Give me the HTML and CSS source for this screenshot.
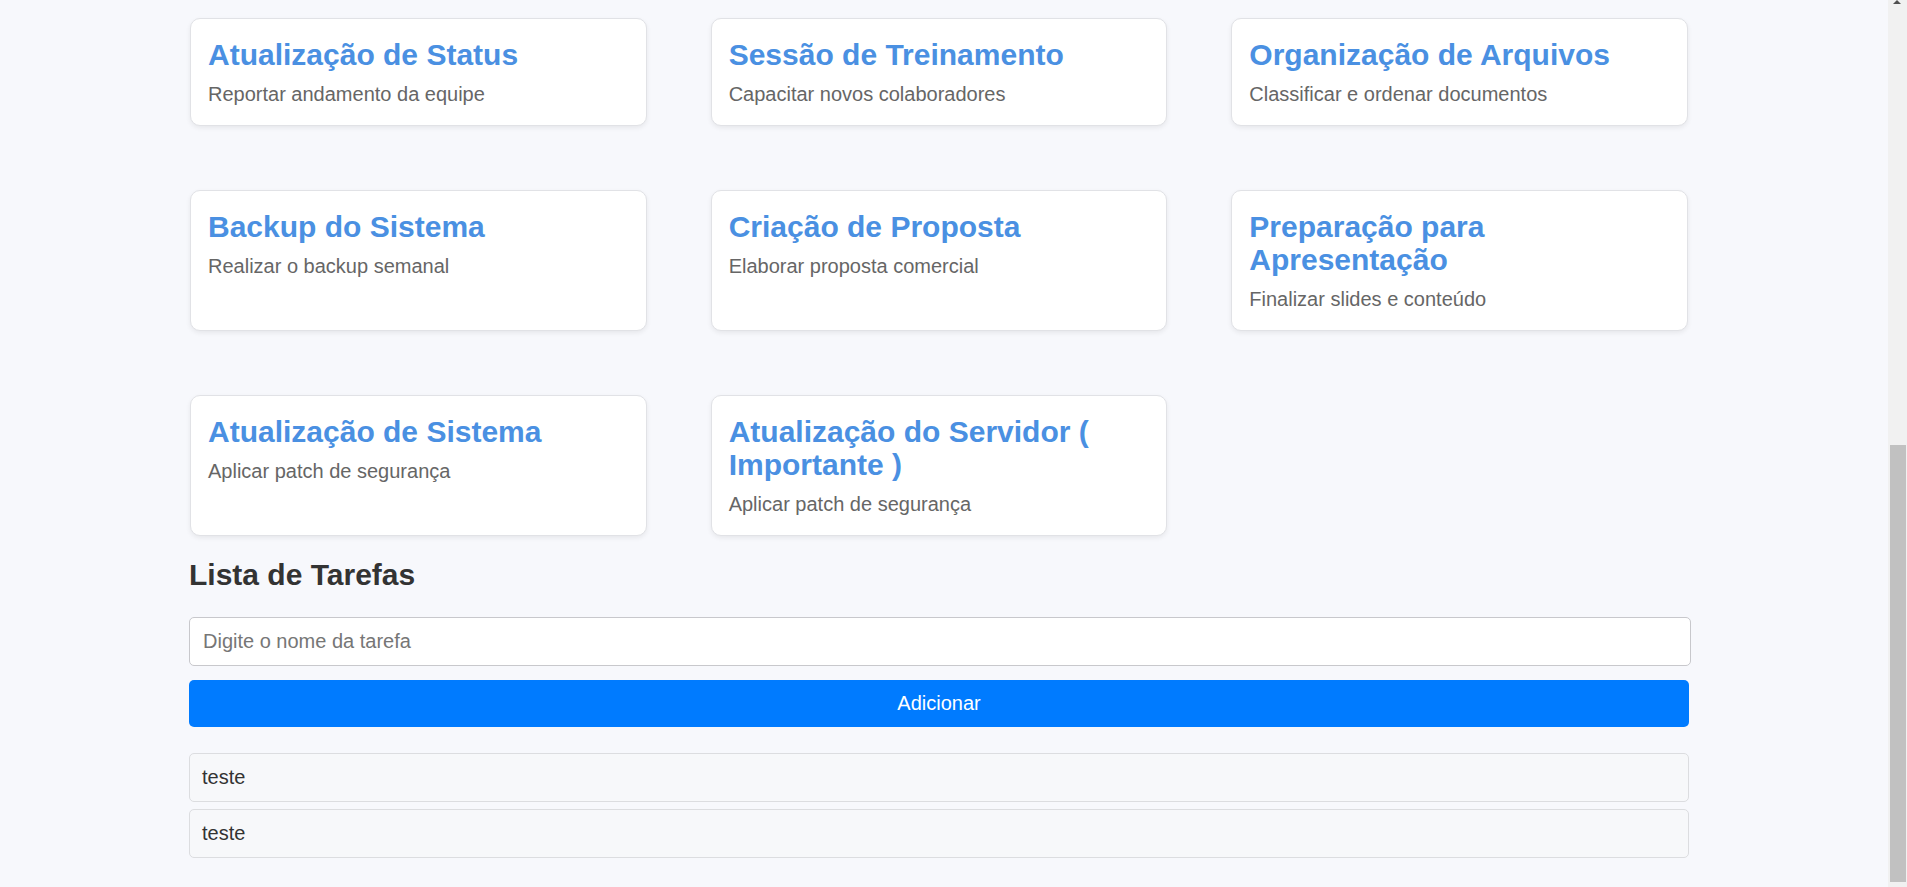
FILE: index.html
```html
<!DOCTYPE html>
<html lang="pt-BR">
<head>
<meta charset="utf-8">
<title>Lista de Tarefas</title>
<link rel="stylesheet" href="styles.css">
</head>
<body>
<div class="app">
  <div class="cards">
    <div class="card"><h2 class="card-title">Atualização de Status</h2><p class="card-desc">Reportar andamento da equipe</p></div>
    <div class="card"><h2 class="card-title">Sessão de Treinamento</h2><p class="card-desc">Capacitar novos colaboradores</p></div>
    <div class="card"><h2 class="card-title">Organização de Arquivos</h2><p class="card-desc">Classificar e ordenar documentos</p></div>
    <div class="card"><h2 class="card-title">Backup do Sistema</h2><p class="card-desc">Realizar o backup semanal</p></div>
    <div class="card"><h2 class="card-title">Criação de Proposta</h2><p class="card-desc">Elaborar proposta comercial</p></div>
    <div class="card"><h2 class="card-title">Preparação para Apresentação</h2><p class="card-desc">Finalizar slides e conteúdo</p></div>
    <div class="card"><h2 class="card-title">Atualização de Sistema</h2><p class="card-desc">Aplicar patch de segurança</p></div>
    <div class="card"><h2 class="card-title">Atualização do Servidor ( Importante )</h2><p class="card-desc">Aplicar patch de segurança</p></div>
  </div>
  <section class="todo">
    <h2 class="todo-title">Lista de Tarefas</h2>
    <input class="todo-input" type="text" placeholder="Digite o nome da tarefa">
    <button class="todo-button" type="button">Adicionar</button>
    <ul class="todo-list">
      <li class="todo-item">teste</li>
      <li class="todo-item">teste</li>
    </ul>
  </section>
</div>
<div class="scrollbar" aria-hidden="true">
  <span class="scroll-arrow"></span>
  <span class="scroll-thumb"></span>
</div>
</body>
</html>
```

FILE: styles.css
```css
* {
  box-sizing: border-box;
}
body {
  margin: 0;
  padding: 18px 29px 29px 0;
  background: #f7f8fc;
  font-family: "Liberation Sans", Arial, sans-serif;
  color: #333;
}
.app {
  width: 1500px;
  margin: 0 auto;
}
.cards {
  display: grid;
  grid-template-columns: repeat(3, 1fr);
  gap: 64px;
  padding: 0 1px;
}
.card {
  background: #fff;
  border: 1px solid #e1e2e6;
  border-radius: 10px;
  box-shadow: 0 2px 5px rgba(0, 0, 0, 0.07);
  padding: 19px 17px;
}
.card-title {
  margin: 0 0 12px;
  font-size: 30px;
  line-height: 33px;
  font-weight: bold;
  color: #4a90e2;
}
.card-desc {
  margin: 0;
  font-size: 20px;
  line-height: 23px;
  color: #666;
}
.todo-title {
  margin: 22px 0 26px;
  font-size: 30px;
  line-height: 33px;
  font-weight: bold;
  color: #333;
}
.todo-input {
  display: block;
  width: 1502px;
  height: 49px;
  padding: 0 13px;
  border: 1px solid #c8c8cc;
  border-radius: 5px;
  background: #fff;
  font-family: "Liberation Sans", Arial, sans-serif;
  font-size: 20px;
  color: #333;
}
.todo-input::placeholder {
  color: #767676;
}
.todo-button {
  display: block;
  width: 100%;
  height: 47px;
  margin-top: 14px;
  border: none;
  border-radius: 5px;
  background: #007bff;
  color: #fff;
  font-family: "Liberation Sans", Arial, sans-serif;
  font-size: 20px;
}
.todo-list {
  list-style: none;
  margin: 26px 0 0;
  padding: 0;
  display: flex;
  flex-direction: column;
  gap: 7px;
}
.todo-item {
  height: 49px;
  padding: 0 12px;
  display: flex;
  align-items: center;
  border: 1px solid #dcdde0;
  border-radius: 5px;
  background: #f7f8fa;
  font-size: 20px;
  color: #333;
}
.scrollbar {
  position: fixed;
  top: 0;
  right: 0;
  width: 19px;
  height: 100vh;
  background: #f1f1f1;
}
.scroll-arrow {
  position: absolute;
  top: 0;
  left: 5px;
  width: 0;
  height: 0;
  border-left: 4px solid transparent;
  border-right: 4px solid transparent;
  border-bottom: 4px solid #505050;
}
.scroll-thumb {
  position: absolute;
  top: 445px;
  left: 2px;
  width: 16px;
  height: 437px;
  background: #c1c1c1;
}
```
